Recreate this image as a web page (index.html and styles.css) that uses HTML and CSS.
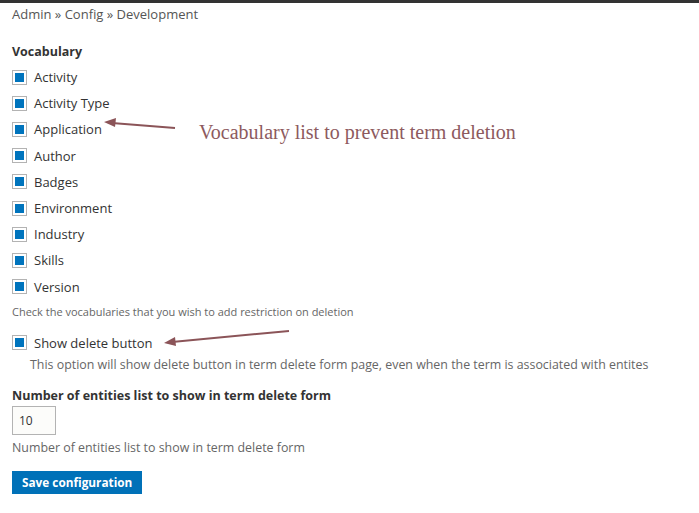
FILE: index.html
```html
<!DOCTYPE html>
<html>
<head>
    <title>Development</title>
    <link rel="stylesheet" href="styles.css">
</head>
<body>
    <div class="topbar"></div>
    <div class="page">
        <div class="breadcrumb">Admin » Config » Development</div>

        <div class="field field-vocab">
            <div class="field-title">Vocabulary</div>
            <div class="checks">
                <label class="check"><span class="box"></span>Activity</label>
                <label class="check"><span class="box"></span>Activity Type</label>
                <label class="check"><span class="box"></span>Application</label>
                <label class="check"><span class="box"></span>Author</label>
                <label class="check"><span class="box"></span>Badges</label>
                <label class="check"><span class="box"></span>Environment</label>
                <label class="check"><span class="box"></span>Industry</label>
                <label class="check"><span class="box"></span>Skills</label>
                <label class="check"><span class="box"></span>Version</label>
            </div>
            <div class="desc desc-small">Check the vocabularies that you wish to add restriction on deletion</div>
        </div>

        <div class="field field-delete">
            <label class="check"><span class="box"></span>Show delete button</label>
            <div class="desc desc-indent">This option will show delete button in term delete form page, even when the term is associated with entites</div>
        </div>

        <div class="field field-number">
            <div class="field-title">Number of entities list to show in term delete form</div>
            <input type="text" class="num-input" value="10">
            <div class="desc">Number of entities list to show in term delete form</div>
        </div>

        <button class="save-btn">Save configuration</button>
    </div>

    <!-- annotations drawn over the screenshot -->
    <div class="note">Vocabulary list to prevent term deletion</div>
    <svg class="arrows" width="699" height="513" viewBox="0 0 699 513">
        <g stroke="#8b5458" stroke-width="2" fill="#8b5458">
            <line x1="175" y1="128" x2="112" y2="123"/>
            <polygon points="104,122 116,118 115,127" stroke="none"/>
            <line x1="289" y1="331" x2="172" y2="342"/>
            <polygon points="164,343 175,337 176,346" stroke="none"/>
        </g>
    </svg>
</body>
</html>
```

FILE: styles.css
```css
body {
    margin: 0;
    font-family: "Open Sans", "Liberation Sans", sans-serif;
    font-size: 13px;
    color: #333;
    background: #fff;
}

.topbar {
    height: 3px;
    background-color: #333;
}

.page {
    padding: 0 12px;
}

.breadcrumb {
    color: #555;
    line-height: 18px;
    margin-top: 2px;
}

.field-vocab {
    margin-top: 20px;
}

.field-delete {
    margin-top: 10px;
}

.field-number {
    margin-top: 14px;
}

.field-title {
    font-weight: bold;
    font-size: 12.5px;
    line-height: 18px;
    margin-bottom: 3px;
}

.field-number .field-title {
    margin-bottom: 1px;
}

.checks {
    display: flex;
    flex-direction: column;
}

.check {
    display: flex;
    align-items: center;
    height: 26.2px;
}

.box {
    width: 13px;
    height: 13px;
    border: 1px solid #b3b3b3;
    background: #fff;
    margin-right: 7px;
    display: flex;
    align-items: center;
    justify-content: center;
}

.box::after {
    content: "";
    width: 9px;
    height: 9px;
    background-color: #0074bd;
}

.desc {
    font-size: 12.4px;
    color: #666;
    line-height: 16px;
    margin-top: 2px;
}

.desc-small {
    font-size: 11px;
    margin-top: 4px;
}

.desc-indent {
    padding-left: 18px;
    margin-top: 1px;
}

.num-input {
    display: block;
    width: 30px;
    height: 27px;
    padding: 0 6px;
    border: 1px solid #b3b3b3;
    background: #fcfcfa;
    font-family: inherit;
    font-size: 12px;
    color: #333;
    margin-bottom: 5px;
}

.save-btn {
    margin-top: 15px;
    padding: 0 10px;
    height: 23px;
    border: none;
    background-color: #0071b8;
    color: #fff;
    font-family: inherit;
    font-weight: bold;
    font-size: 11.8px;
}

.note {
    position: absolute;
    left: 199px;
    top: 121px;
    font-family: "Liberation Serif", serif;
    font-size: 20px;
    color: #8d5a5e;
}

.arrows {
    position: absolute;
    left: 0;
    top: 0;
    pointer-events: none;
}
```
